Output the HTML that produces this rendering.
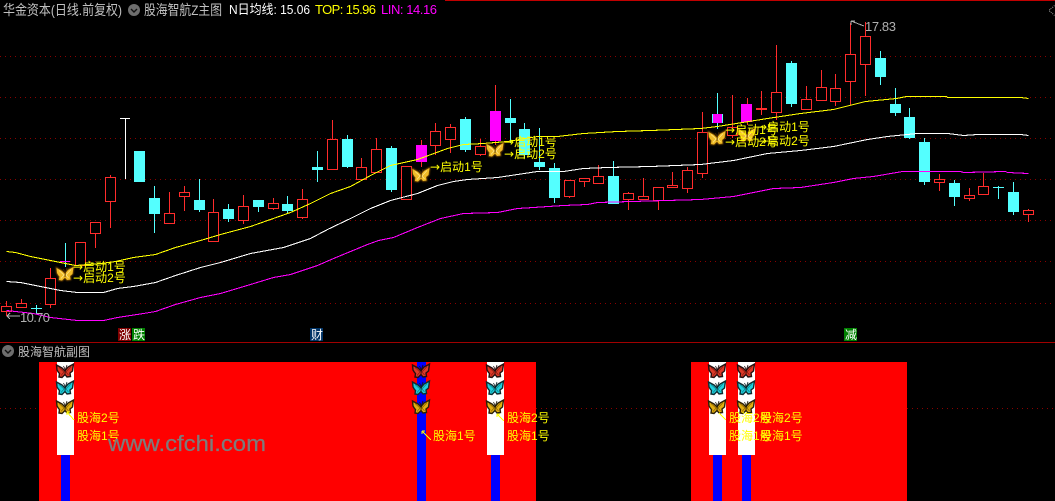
<!DOCTYPE html>
<html><head><meta charset="utf-8"><style>
html,body{margin:0;padding:0;background:#000;width:1055px;height:501px;overflow:hidden}
svg{display:block}
text{font-family:"Liberation Sans","WenQuanYi Zen Hei","Noto Sans CJK SC",sans-serif;font-size:12px}
.l{fill:#ff0;font-size:12px}
.a{font-family:"DejaVu Sans",sans-serif}
</style></head><body>
<svg width="1055" height="501" viewBox="0 0 1055 501" xmlns="http://www.w3.org/2000/svg">
<defs>
<filter id="gl" x="-30%" y="-30%" width="160%" height="160%"><feGaussianBlur stdDeviation=".7"/></filter>
<path id="bf" d="M0,0 L-3,-3 L-8.5,-6 L-8,-1 L-6.5,1.5 L-5.5,2.5 L-6,6 L-3,6.5 L0,3.5 L2,6 L5.5,5.5 L5,2 L7.5,0 L8.5,-7 L3,-4 L0.5,-1 Z"/>
<path id="vn" d="M-6,-3.5 L-1,1 L-4,4.5 M6,-4.5 L1,1 L3.5,4" fill="none" stroke-width=".7"/>
<path id="an" d="M0,3 L0.3,-1 L-1.5,-5 M0.3,-1 L2,-6" fill="none" stroke-width=".8"/>
<g id="gold"><use href="#bf" fill="#8a5400" stroke="#8a5400" stroke-width="1.5" filter="url(#gl)"/><use href="#bf" fill="#f0bc28"/><use href="#vn" stroke="#ffe890"/><use href="#an" stroke="#4a2a00"/></g>
<g id="sr"><use href="#bf" fill="#dc3a28" stroke="#241010" stroke-width="1.4"/><use href="#vn" stroke="#8a1a10"/><use href="#an" stroke="#200808"/></g>
<g id="sc"><use href="#bf" fill="#20cfdc" stroke="#102c30" stroke-width="1.4"/><use href="#vn" stroke="#0a7f8a"/><use href="#an" stroke="#082024"/></g>
<g id="sg"><use href="#bf" fill="#e2ae10" stroke="#2a2008" stroke-width="1.4"/><use href="#vn" stroke="#8a6200"/><use href="#an" stroke="#201804"/></g>
</defs>
<rect width="1055" height="501" fill="#000"/>
<rect x="445" y="0" width="610" height="1" fill="#c00000"/>

<!-- grid -->
<g stroke="#8a0000" stroke-dasharray="1 4" shape-rendering="crispEdges">
<path d="M0 56.5H1055M0 97.5H1055M0 138.5H1055M0 179.5H1055M0 220.5H1055M0 261.5H1055M0 303.5H1055"/>
<path d="M0 408.5H39M536 408.5H691M907 408.5H1055"/>
</g>

<!-- candles -->
<g shape-rendering="crispEdges">
<path stroke="#ff2c2c" fill="none" d="M6.5 301V316M21.5 299V308M50.5 268V308M95.5 222V248M110.5 175V228M169.5 192V223M184.5 186V211M213.5 199V241M243.5 195V224M273.5 198V210M302.5 189V219M332.5 120V170M361.5 158V180M376.5 138V173M435.5 123V155M450.5 124V153M480.5 139V156M421.5 140V167M495.5 85V145M569.5 180V198M584.5 178V187M598.5 165V184M628.5 192V210M643.5 178V199M658.5 187V210M672.5 172V187M687.5 167V193M702.5 112V178M732.5 95V138M747.5 98V125M761.5 91V115M776.5 45V120M806.5 86V109M821.5 70V101M835.5 74V106M850.5 23V105M865.5 22V96M939.5 174V191M969.5 188V201M983.5 173V195M1028.5 209V222"/>
<g stroke="#ff2c2c" fill="#000">
<rect x="1.5" y="306.5" width="10" height="5"/><rect x="16.5" y="303.5" width="10" height="4"/><rect x="45.5" y="278.5" width="10" height="26"/><rect x="75.5" y="242.5" width="10" height="23"/><rect x="90.5" y="222.5" width="10" height="11"/><rect x="105.5" y="177.5" width="10" height="24"/><rect x="164.5" y="213.5" width="10" height="10"/><rect x="179.5" y="192.5" width="10" height="4"/><rect x="208.5" y="212.5" width="10" height="29"/><rect x="238.5" y="206.5" width="10" height="14"/><rect x="268.5" y="203.5" width="10" height="5"/><rect x="297.5" y="199.5" width="10" height="18"/><rect x="327.5" y="139.5" width="10" height="30"/><rect x="356.5" y="167.5" width="10" height="12"/><rect x="371.5" y="149.5" width="10" height="23"/><rect x="401.5" y="166.5" width="10" height="33"/><rect x="430.5" y="131.5" width="10" height="14"/><rect x="445.5" y="127.5" width="10" height="12"/><rect x="475.5" y="146.5" width="10" height="8"/><rect x="564.5" y="180.5" width="10" height="16"/><rect x="579.5" y="178.5" width="10" height="3"/><rect x="593.5" y="176.5" width="10" height="7"/><rect x="623.5" y="193.5" width="10" height="6"/><rect x="638.5" y="196.5" width="10" height="3"/><rect x="653.5" y="187.5" width="10" height="13"/><rect x="667.5" y="185.5" width="10" height="2"/><rect x="682.5" y="170.5" width="10" height="18"/><rect x="697.5" y="132.5" width="10" height="41"/><rect x="727.5" y="127.5" width="10" height="8"/><rect x="771.5" y="92.5" width="10" height="20"/><rect x="801.5" y="99.5" width="10" height="10"/><rect x="816.5" y="87.5" width="10" height="13"/><rect x="830.5" y="88.5" width="10" height="13"/><rect x="845.5" y="54.5" width="10" height="27"/><rect x="860.5" y="36.5" width="10" height="28"/><rect x="934.5" y="179.5" width="10" height="3"/><rect x="964.5" y="195.5" width="10" height="3"/><rect x="978.5" y="186.5" width="10" height="8"/><rect x="1023.5" y="210.5" width="10" height="4"/>
</g>
<rect x="756" y="108" width="11" height="2" fill="#ff2c2c"/>
<path stroke="#54ffff" fill="none" d="M65.5 243V267M36.5 305V314M31 308.5H42M154.5 186V233M199.5 179V212M228.5 204V222M258.5 200V212M287.5 196V214M317.5 151V182M347.5 135V168M391.5 146V192M465.5 117V152M510.5 99V143M524.5 123V158M539.5 128V170M554.5 163V203M613.5 161V204M717.5 93V129M791.5 61V107M880.5 51V85M895.5 88V116M909.5 108V139M924.5 138V185M954.5 180V206M998.5 186V199M993 187.5H1004M1013.5 182V215"/>
<g fill="#54ffff">
<rect x="134" y="151" width="11" height="31"/><rect x="149" y="198" width="11" height="16"/><rect x="194" y="200" width="11" height="10"/><rect x="223" y="209" width="11" height="10"/><rect x="253" y="200" width="11" height="7"/><rect x="282" y="204" width="11" height="7"/><rect x="312" y="167" width="11" height="3"/><rect x="342" y="139" width="11" height="28"/><rect x="386" y="148" width="11" height="42"/><rect x="460" y="119" width="11" height="31"/><rect x="505" y="118" width="11" height="5"/><rect x="519" y="129" width="11" height="26"/><rect x="534" y="162" width="11" height="5"/><rect x="549" y="168" width="11" height="30"/><rect x="608" y="176" width="11" height="28"/><rect x="712" y="114" width="11" height="9"/><rect x="786" y="63" width="11" height="41"/><rect x="875" y="58" width="11" height="19"/><rect x="890" y="104" width="11" height="9"/><rect x="904" y="117" width="11" height="21"/><rect x="919" y="142" width="11" height="40"/><rect x="949" y="183" width="11" height="14"/><rect x="1008" y="192" width="11" height="20"/>
</g>
<g fill="#ff00ff">
<rect x="416" y="145" width="11" height="17"/><rect x="490" y="111" width="11" height="30"/><rect x="713" y="114" width="9" height="9"/><rect x="741" y="104" width="11" height="18"/><rect x="60" y="261" width="10" height="1"/>
</g>
<path stroke="#fff" fill="none" d="M125.5 118V179M120 118.5H130"/>
</g>

<!-- MA lines -->
<g fill="none" shape-rendering="crispEdges" stroke-width="1.05" transform="translate(.5 .5)">
<polyline stroke="#ffff00" points="6,251 15,252 30,256 45,259 60,262 75,265 100,263 115,261 133,257 155,254 175,247 200,240 220,234 250,226 270,219 290,212 310,203 330,193 350,186 370,175 390,165 417,159 447,148 463,144 483,143 507,141 537,136 557,136 583,133 617,131 650,130 700,128 717,126 767,118 800,113 833,109 865,101 896,98 906,96 946,96 947,97 992,97 1020,97 1028,98"/>
<polyline stroke="#ffffff" points="6,281 20,282 45,287 60,290 77,292 103,292 117,288 133,286 155,282 175,275 200,267 220,262 250,253 283,247 310,238 327,229 350,218 370,208 390,200 417,193 437,185 453,181 467,179 497,177 517,174 537,171 563,171 583,168 607,167 650,166 700,164 733,160 767,153 800,150 833,146 867,139 887,136 917,133 947,133 963,135 977,134 1020,134 1028,135"/>
<polyline stroke="#ff00ff" points="6,310 33,313 50,317 77,320 103,320 117,317 143,313 155,311 175,304 200,297 220,293 250,284 273,277 290,274 317,265 333,258 350,251 367,244 378,240 393,237 417,227 440,218 463,213 497,212 517,208 533,207 563,205 587,204 597,202 700,199 733,196 773,188 800,187 833,182 853,178 873,176 902,171 960,171 963,172 1005,171 1007,172 1028,173"/>
</g>

<!-- header -->
<text x="3" y="15" fill="#c0c0c0" style="font-size:14px" textLength="119" lengthAdjust="spacingAndGlyphs">华金资本(日线.前复权)</text>
<circle cx="134" cy="10" r="6" fill="#6e6e6e"/><path d="M131 9L134 12L137 9" stroke="#111" fill="none" stroke-width="1.4"/>
<text x="144" y="15" fill="#c0c0c0" style="font-size:14px" textLength="78" lengthAdjust="spacingAndGlyphs">股海智航Z主图</text>
<text x="229" y="14" fill="#fff" style="font-size:13px" textLength="81" lengthAdjust="spacingAndGlyphs">N日均线: 15.06</text>
<text x="315" y="14" fill="#ff0" style="font-size:13px" textLength="61" lengthAdjust="spacing">TOP: 15.96</text>
<text x="381" y="14" fill="#ff00ff" style="font-size:13px" textLength="56" lengthAdjust="spacing">LIN: 14.16</text>

<!-- corner marker -->
<path d="M1054.5 5.5L1049 10.5L1054.5 15.5" fill="none" stroke="#808080" stroke-dasharray="1 1" shape-rendering="crispEdges"/>

<!-- price labels -->
<path d="M864 26L851 21M851 21H855M851 21V25" stroke="#b0b0b0" fill="none" shape-rendering="crispEdges"/>
<text x="865" y="31" fill="#b0b0b0" style="font-size:13px" textLength="31" lengthAdjust="spacing">17.83</text>
<path d="M7 316H20M7 316L10 313M7 316L10 319" stroke="#b0b0b0" fill="none" shape-rendering="crispEdges"/>
<text x="20" y="322" fill="#b0b0b0" style="font-size:13px" textLength="30" lengthAdjust="spacing">10.70</text>

<!-- butterflies main -->
<use href="#gold" x="65" y="274"/><use href="#gold" x="421" y="175"/><use href="#gold" x="495" y="150"/><use href="#gold" x="717" y="138"/><use href="#gold" x="747" y="135"/>

<!-- signal labels -->
<text class="l" x="73" y="271"><tspan class="a">→</tspan>启动1号</text><text class="l" x="73" y="282"><tspan class="a">→</tspan>启动2号</text>
<text class="l" x="430" y="171"><tspan class="a">→</tspan>启动1号</text>
<text class="l" x="504" y="146"><tspan class="a">→</tspan>启动1号</text><text class="l" x="504" y="158"><tspan class="a">→</tspan>启动2号</text>
<text class="l" x="725" y="134"><tspan class="a">→</tspan>启动1号</text><text class="l" x="725" y="146"><tspan class="a">→</tspan>启动2号</text>
<text class="l" x="757" y="131"><tspan class="a">→</tspan>启动1号</text><text class="l" x="757" y="145"><tspan class="a">→</tspan>启动2号</text>

<!-- tags -->
<rect x="118" y="328" width="13" height="13" fill="#800000"/><text x="119" y="339" fill="#fff" style="font-size:12px">涨</text>
<rect x="132" y="328" width="13" height="13" fill="#008000"/><text x="133" y="339" fill="#fff" style="font-size:12px">跌</text>
<rect x="310" y="328" width="13" height="13" fill="#003366"/><text x="311" y="339" fill="#fff" style="font-size:12px">财</text>
<rect x="844" y="328" width="13" height="13" fill="#008000"/><text x="845" y="339" fill="#fff" style="font-size:12px">减</text>

<rect x="0" y="342" width="1055" height="1" fill="#a00000"/>

<!-- sub title -->
<circle cx="8" cy="351" r="6" fill="#6e6e6e"/><path d="M5 350L8 353L11 350" stroke="#111" fill="none" stroke-width="1.4"/>
<text x="18" y="356" fill="#c0c0c0" style="font-size:12px">股海智航副图</text>

<!-- sub panel -->
<g shape-rendering="crispEdges">
<rect x="39" y="362" width="497" height="139" fill="#f00"/>
<rect x="691" y="362" width="216" height="139" fill="#f00"/>
<g fill="#fff"><rect x="57" y="362" width="17" height="93"/><rect x="487" y="362" width="17" height="93"/><rect x="709" y="362" width="17" height="93"/><rect x="738" y="362" width="17" height="93"/></g>
<g fill="#00f"><rect x="61" y="455" width="9" height="46"/><rect x="417" y="362" width="9" height="139"/><rect x="491" y="455" width="9" height="46"/><rect x="713" y="455" width="9" height="46"/><rect x="742" y="455" width="9" height="46"/></g>
</g>
<use href="#sr" x="65" y="371"/><use href="#sc" x="65" y="388"/><use href="#sg" x="65" y="407"/>
<use href="#sr" x="421" y="371"/><use href="#sc" x="421" y="388"/><use href="#sg" x="421" y="407"/>
<use href="#sr" x="495" y="371"/><use href="#sc" x="495" y="388"/><use href="#sg" x="495" y="407"/>
<use href="#sr" x="717" y="371"/><use href="#sc" x="717" y="388"/><use href="#sg" x="717" y="407"/>
<use href="#sr" x="746" y="371"/><use href="#sc" x="746" y="388"/><use href="#sg" x="746" y="407"/>

<g stroke="#ff0" fill="none" shape-rendering="crispEdges">
<path d="M67 412L74 420M67 412V415M67 412H70M497 414L504 421M497 414V417M497 414H500M719 413L726 420M422 431L431 440M422 431V434M422 431H425"/>
</g>
<text class="l" x="77" y="422">股海2号</text><text class="l" x="77" y="440">股海1号</text>
<text class="l" x="433" y="440">股海1号</text>
<text class="l" x="507" y="422">股海2号</text><text class="l" x="507" y="440">股海1号</text>
<text class="l" x="729" y="422">股海2号</text><text class="l" x="729" y="440">股海1号</text>
<text class="l" x="760" y="422">股海2号</text><text class="l" x="760" y="440">股海1号</text>

<text x="108" y="451" fill="#7c7c7c" stroke="#7c7c7c" stroke-width=".2" style="font-size:22px" textLength="158" lengthAdjust="spacingAndGlyphs">www.cfchi.com</text>
</svg>
</body></html>
